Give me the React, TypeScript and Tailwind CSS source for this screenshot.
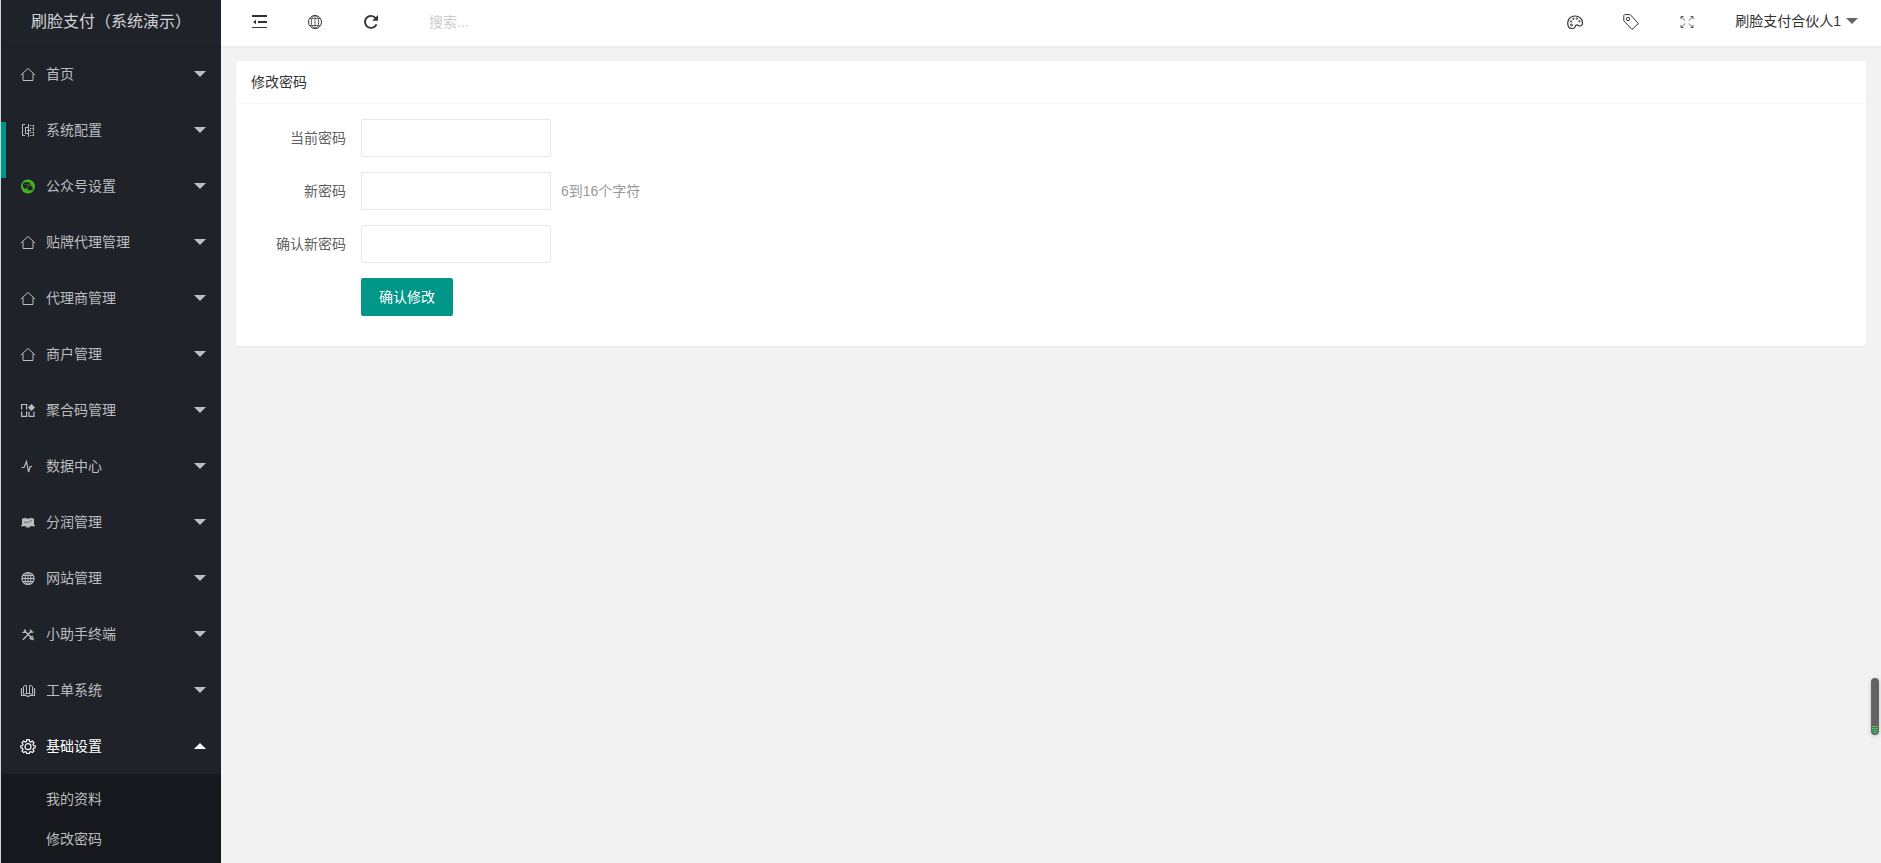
import type { ReactNode } from 'react';

function Icon({ children }: { children: ReactNode }) {
  return (
    <svg viewBox="0 0 16 16" fill="none" stroke="currentColor" aria-hidden="true" className="size-4 shrink-0">
      {children}
    </svg>
  );
}

const HomeIcon = () => (
  <Icon>
    <path d="M.8 9 8 2.500 15.200 9M3 7.500v7h10v-7" strokeWidth="1" />
  </Icon>
);

const ConfigIcon = () => (
  <Icon>
    <path d="M5 2.500H2.500v11H5M8.500 2v13M5.500 5.500h3M5.500 11.500h3M5.500 5v7" strokeWidth="1" />
    <path d="M7 8.500h4" strokeWidth="1" />
    <path d="M10 3.500h4M10 6.500h4M10 10.500h4M10 13.500h4M13.500 3v11" strokeWidth="1.200" strokeDasharray="1.500 .8" />
  </Icon>
);

const WechatIcon = () => (
  <Icon>
    <circle cx="8" cy="8.500" r="7" fill="#44b525" stroke="none" />
    <ellipse cx="6.700" cy="7.300" rx="3.900" ry="3.300" fill="#20222a" stroke="none" />
    <path d="m4 9.200-.2 2 2-1.200z" fill="#20222a" stroke="none" />
    <ellipse cx="9.900" cy="9.900" rx="3.100" ry="2.600" fill="#20222a" stroke="#44b525" strokeWidth=".6" />
    <path d="m11 11.800 1.500 1v-2z" fill="#20222a" stroke="none" />
    <g fill="#44b525" stroke="none">
      <circle cx="5.400" cy="6.400" r=".55" />
      <circle cx="8" cy="6.400" r=".55" />
    </g>
  </Icon>
);

const AppsIcon = () => (
  <Icon>
    <path d="M1.600 7.500v-5h5v5M1.600 9.500v4.900h5V9.500M9 9.500v4.900h5V9.500" strokeWidth="1.200" />
    <path d="m11.500 2 3.500 3.500L11.500 9 8 5.500z" fill="currentColor" stroke="none" />
  </Icon>
);

const PulseIcon = () => (
  <Icon>
    <path d="M1.500 9.500h2.500L6.500 3.500l2 10.500 1.700-5.500H12" strokeWidth="1.200" />
  </Icon>
);

const BoardIcon = () => (
  <Icon>
    <path d="M2 4.500h2.500V3.800h1.300v.7h4.500v-.7h1.300v.7H14V11h1v1.300H9.800v1.300H6.200v-1.300H1V11h1z" fill="currentColor" stroke="none" />
    <path d="M3.800 8.700 6 8l1.500.7 2-1.200 2.500-1" stroke="#20222a" strokeWidth=".5" />
  </Icon>
);

const GlobeIcon = () => (
  <Icon>
    <circle cx="8" cy="8.500" r="6" strokeWidth="1.200" />
    <ellipse cx="8" cy="8.500" rx="2.900" ry="6" strokeWidth="1" />
    <path d="M8 2.500v12M2 8.500h12M3 5.500h10M3 11.500h10" strokeWidth="1" />
  </Icon>
);

const ToolsIcon = () => (
  <Icon>
    <path d="m12 4.500-9 9.200M4 4l9 9.500" strokeWidth="1.300" />
    <path d="M2.300 6.300h2.900V3.500M10.500 3.500v2.700h3M9.500 12.800l3-3" strokeWidth="1.200" />
    <path d="m10 10.500 2.500-.5 1.500 3-1 1.200-3-1z" fill="currentColor" stroke="none" />
    <path d="m11.500 11.500 1 1" stroke="#20222a" strokeWidth=".8" />
  </Icon>
);

const TicketIcon = () => (
  <Icon>
    <path d="M1.500 6v7.500H6L8 14.500l2-1H14.500V6" strokeWidth="1.200" />
    <path d="M3.500 12V4.500L5 3.500h1.500v8l-3 1M12.500 12V4.500L11 3.500H9.500v8l3 1" strokeWidth="1" />
    <path d="M6 11.500h4" strokeWidth="1" />
  </Icon>
);

const GearIcon = () => (
  <Icon>
    <path
      d="m6.800 1.700-.4 1.900-1.200.5-1.600-1L2 4.700l1 1.600-.5 1.200-1.700.3v2l1.700.4.5 1.200-1 1.600 1.600 1.600 1.600-1 1.200.5.4 1.500h2.400l.4-1.500 1.200-.5 1.600 1 1.600-1.600-1-1.600.5-1.200 1.700-.4v-2l-1.700-.3-.5-1.200 1-1.600-1.600-1.600-1.600 1-1.200-.5-.4-1.900z"
      strokeWidth="1.200"
    />
    <circle cx="8" cy="8.700" r="3" strokeWidth="1.200" />
  </Icon>
);

const FoldIcon = () => (
  <Icon>
    <path d="M1 2h15M7 8h9" strokeWidth="2" />
    <path d="M1 13.500h15" strokeWidth="1" />
    <path d="M5 5.800v4.400L2 8z" fill="currentColor" stroke="none" />
  </Icon>
);

const WebsiteIcon = () => (
  <Icon>
    <circle cx="8" cy="8" r="6.500" strokeWidth="1" />
    <ellipse cx="8" cy="8" rx="3.700" ry="6.500" strokeWidth=".8" />
    <path d="M8 1.500v13M2.500 4.500h11M2.500 11.500h11" strokeWidth=".7" />
  </Icon>
);

const RefreshIcon = () => (
  <Icon>
    <path d="M13.500 10.300A6 6 0 1 1 12.600 4" strokeWidth="1.900" />
    <path d="M15 1v5.800H9.200z" fill="currentColor" stroke="none" />
  </Icon>
);

const ThemeIcon = () => (
  <Icon>
    <path
      d="M1.500 12.800C-.8 7.500 2.500 2 8 2c4 0 7.500 2.800 7.500 6.500 0 2.200-.8 3.500-2.500 3.500-1.500 0-1.800-1.200-3.200-1.200-1.800 0-1.300 1.600-2 2.700-.9 1.300-4.800 1.600-6.300-.7z"
      strokeWidth="1.200"
    />
    <g strokeWidth="1">
      <circle cx="4.500" cy="11" r="1" />
      <circle cx="4" cy="7.500" r=".7" />
      <circle cx="6.300" cy="4.800" r=".7" />
      <circle cx="9.800" cy="4.600" r=".7" />
      <circle cx="12.500" cy="7.200" r=".7" />
    </g>
  </Icon>
);

const TagIcon = () => (
  <Icon>
    <path d="M.8 1.500v5.300l8.200 8.700 6.400-6L7.200.6H1.700z" strokeWidth="1" strokeLinejoin="round" />
    <circle cx="5" cy="5" r="1.700" strokeWidth="1" />
  </Icon>
);

const FullscreenIcon = () => (
  <Icon>
    <path
      d="M2 5V2.500h2.500M11.500 2.500H14V5M14 11v2.500h-2.500M4.500 13.500H2V11"
      strokeWidth="1"
      strokeOpacity=".8"
    />
    <path
      d="m2 2.500 4.200 4M14 2.500l-4.200 4M14 13.500l-4.200-4M2 13.500l4.200-4"
      strokeWidth="1"
      strokeOpacity=".75"
    />
  </Icon>
);

function Caret({ up = false }: { up?: boolean }) {
  return (
    <svg viewBox="0 0 12 6" fill="currentColor" aria-hidden="true" className="h-1.5 w-3 shrink-0">
      <path d={up ? 'M0 6 6 0l6 6z' : 'M0 0h12L6 6z'} />
    </svg>
  );
}

type MenuEntry = { label: string; icon: ReactNode; children?: string[] };

const menu: MenuEntry[] = [
  { label: '首页', icon: <HomeIcon /> },
  { label: '系统配置', icon: <ConfigIcon /> },
  { label: '公众号设置', icon: <WechatIcon /> },
  { label: '贴牌代理管理', icon: <HomeIcon /> },
  { label: '代理商管理', icon: <HomeIcon /> },
  { label: '商户管理', icon: <HomeIcon /> },
  { label: '聚合码管理', icon: <AppsIcon /> },
  { label: '数据中心', icon: <PulseIcon /> },
  { label: '分润管理', icon: <BoardIcon /> },
  { label: '网站管理', icon: <GlobeIcon /> },
  { label: '小助手终端', icon: <ToolsIcon /> },
  { label: '工单系统', icon: <TicketIcon /> },
  { label: '基础设置', icon: <GearIcon />, children: ['我的资料', '修改密码'] },
];

function Sidebar() {
  return (
    <aside className="relative h-full w-[221px] shrink-0 overflow-hidden border-l border-[#d0d2d3] bg-[#20222a] text-[#bcbdbf]">
      <h1 className="flex h-[46px] items-center justify-center pb-0.5 text-base text-[#d2d3d4] shadow-[0_1px_2px_rgba(0,0,0,0.15)]">
        刷脸支付（系统演示）
      </h1>
      <span className="absolute top-[122px] left-0 h-14 w-[5px] bg-[#009688]" />
      <nav>
        <ul>
          {menu.map(({ label, icon, children }) => (
            <li key={label}>
              <button
                type="button"
                aria-expanded={!!children}
                className={`flex h-14 w-full items-center pr-[15px] pl-[19px] text-left ${children ? 'text-white' : ''}`}
              >
                {icon}
                <span className="ml-2.5 flex-1">{label}</span>
                <Caret up={!!children} />
              </button>
              {children && (
                <ul className="bg-[#16181d] py-[5px]">
                  {children.map((child) => (
                    <li key={child}>
                      <a href="#" className="flex h-10 items-center pl-[45px]">
                        {child}
                      </a>
                    </li>
                  ))}
                </ul>
              )}
            </li>
          ))}
        </ul>
      </nav>
    </aside>
  );
}

function IconButton({ label, children }: { label: string; children: ReactNode }) {
  return (
    <button type="button" aria-label={label} className="flex h-full w-14 items-center justify-center">
      {children}
    </button>
  );
}

function Header() {
  return (
    <header className="relative flex h-[46px] shrink-0 items-center bg-white pr-[23px] pb-[2px] pl-2.5 text-[#333] shadow-[0_1px_2px_rgba(0,0,0,0.05)]">
      <IconButton label="侧边伸缩"><FoldIcon /></IconButton>
      <IconButton label="前台"><WebsiteIcon /></IconButton>
      <IconButton label="刷新"><RefreshIcon /></IconButton>
      <input
        type="text"
        aria-label="搜索"
        placeholder="搜索..."
        className="ml-[30px] h-9 w-48 bg-transparent outline-none placeholder:text-[#ccc]"
      />
      <div className="ml-auto flex h-full items-center">
        <IconButton label="主题"><ThemeIcon /></IconButton>
        <IconButton label="便签"><TagIcon /></IconButton>
        <IconButton label="全屏"><FullscreenIcon /></IconButton>
        <button type="button" className="ml-5 flex h-full items-center gap-[5px] pb-0.5">
          刷脸支付合伙人1
          <span className="text-[#666]"><Caret /></span>
        </button>
      </div>
    </header>
  );
}

const fields = [
  { id: 'current', label: '当前密码', hint: '' },
  { id: 'next', label: '新密码', hint: '6到16个字符' },
  { id: 'confirm', label: '确认新密码', hint: '' },
];

function PasswordCard() {
  return (
    <section className="rounded-xs bg-white shadow-[0_1px_2px_rgba(0,0,0,0.05)]">
      <h2 className="flex h-[43px] items-center border-b border-[#f6f6f6] px-[15px] text-[#333]">修改密码</h2>
      <form className="flex flex-col gap-[15px] px-[15px] pt-[15px] pb-[30px]">
        {fields.map(({ id, label, hint }) => (
          <div key={id} className="flex items-center">
            <label htmlFor={id} className="w-[110px] pr-[15px] text-right text-[#5f5f5f]">
              {label}
            </label>
            <input
              id={id}
              type="password"
              className="h-[38px] w-[190px] rounded-xs border border-[#e6e6e6] bg-white pl-2.5 outline-none"
            />
            {hint && <span className="ml-2.5 text-[#999]">{hint}</span>}
          </div>
        ))}
        <button type="button" className="ml-[110px] h-[38px] w-[92px] rounded-xs bg-[#009688] text-white">
          确认修改
        </button>
      </form>
    </section>
  );
}

export default function App() {
  return (
    <div className="flex h-screen bg-[#f2f2f2] font-['Liberation_Sans','Noto_Sans_CJK_SC',sans-serif] text-sm">
      <Sidebar />
      <div className="flex min-w-0 flex-1 flex-col">
        <Header />
        <main className="flex-1 p-[15px]">
          <PasswordCard />
        </main>
      </div>
      <div className="fixed top-[678px] right-[2px] flex h-[57px] w-2 flex-col items-center justify-end gap-px rounded-full bg-[#636363] pb-0.5 shadow-[0_1px_4px_rgba(0,0,0,0.2)]">
        <span className="h-px w-1.5 bg-[#35d45c]" />
        <span className="h-px w-1.5 bg-[#35d45c]" />
        <span className="h-px w-1.5 bg-[#35d45c]" />
        <span className="h-px w-1 bg-[#35d45c]" />
      </div>
    </div>
  );
}
